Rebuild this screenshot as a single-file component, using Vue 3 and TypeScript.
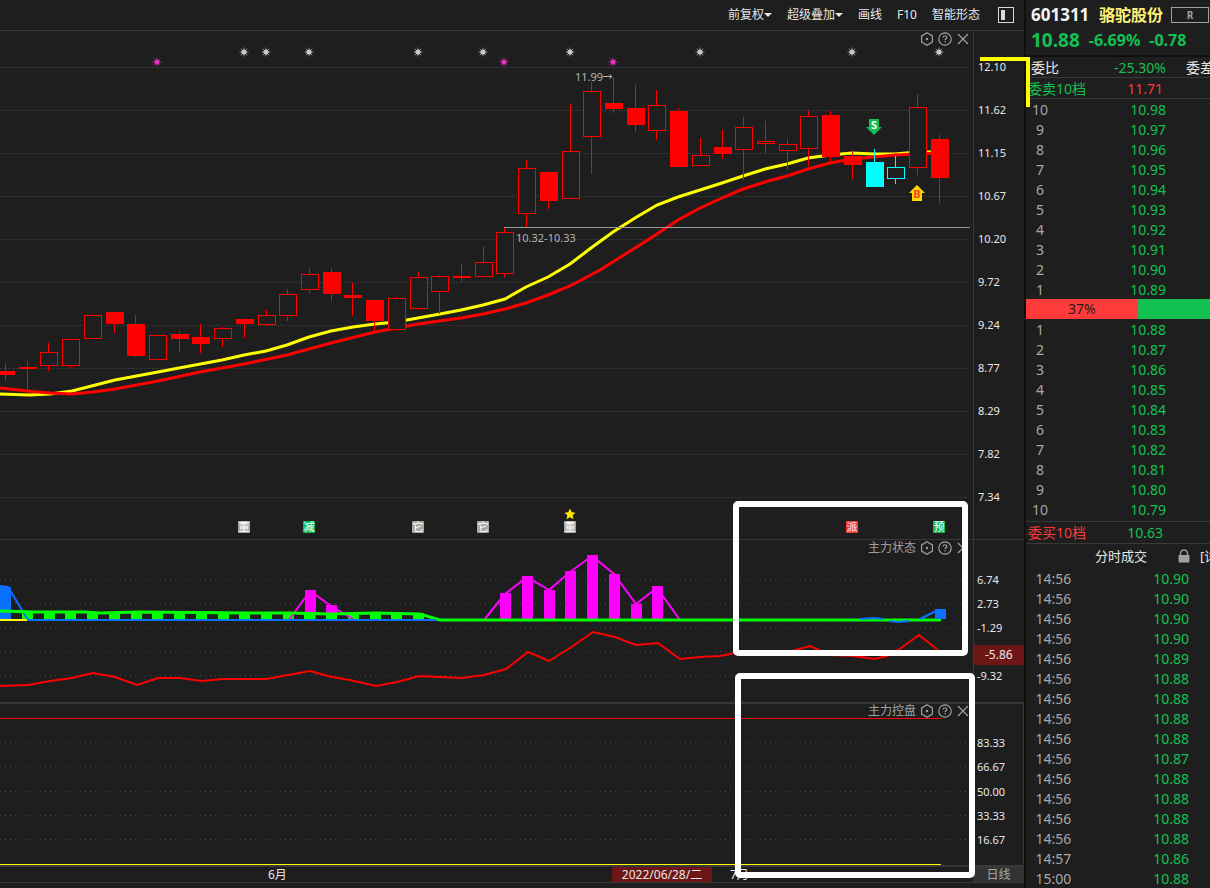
<script setup lang="ts">
type Kind = 'up' | 'down' | 'cyanUp' | 'cyanDown'
interface Candle { x: number; top: number; bottom: number; high: number; low: number; kind: Kind }

const c = (x: number, top: number, bottom: number, high: number, low: number, kind: Kind): Candle =>
  ({ x, top, bottom, high, low, kind })

const candles: Candle[] = [
  c(5, 371, 375, 363, 381, 'down'), c(27, 367, 369, 361, 390, 'down'), c(48, 352, 366, 343, 371, 'up'),
  c(70, 339, 366, 339, 368, 'up'), c(92, 315, 339, 315, 339, 'up'), c(114, 312, 324, 312, 333, 'down'),
  c(135, 324, 356, 315, 357, 'down'), c(157, 335, 360, 335, 360, 'up'), c(179, 334, 339, 331, 352, 'down'),
  c(200, 337, 344, 324, 353, 'down'), c(222, 328, 339, 327, 347, 'up'), c(244, 319, 324, 319, 338, 'down'),
  c(266, 315, 325, 310, 326, 'up'), c(287, 294, 316, 289, 321, 'up'), c(309, 274, 290, 268, 293, 'up'),
  c(331, 272, 294, 268, 301, 'down'), c(352, 295, 298, 283, 316, 'down'), c(374, 300, 321, 300, 331, 'down'),
  c(396, 298, 330, 297, 331, 'up'), c(418, 277, 309, 272, 310, 'up'), c(439, 276, 292, 275, 314, 'up'),
  c(461, 276, 278, 264, 282, 'down'), c(483, 262, 277, 246, 277, 'up'), c(504, 232, 274, 228, 277, 'up'),
  c(526, 168, 214, 160, 227, 'up'), c(548, 172, 201, 172, 209, 'down'), c(570, 151, 199, 104, 199, 'up'),
  c(591, 91, 137, 82, 174, 'up'), c(613, 103, 109, 77, 113, 'down'), c(635, 108, 125, 85, 132, 'down'),
  c(656, 105, 131, 90, 140, 'up'), c(678, 111, 167, 108, 167, 'down'), c(700, 155, 166, 138, 166, 'up'),
  c(722, 147, 154, 130, 159, 'down'), c(743, 127, 150, 117, 180, 'up'), c(765, 141, 144, 121, 153, 'up'),
  c(787, 144, 151, 139, 170, 'up'), c(808, 116, 149, 111, 166, 'up'), c(830, 115, 157, 111, 163, 'down'),
  c(852, 156, 165, 151, 179, 'down'), c(874, 162, 187, 149, 187, 'cyanDown'), c(895, 167, 179, 156, 184, 'cyanUp'),
  c(917, 107, 168, 94, 175, 'up'), c(939, 139, 178, 135, 203, 'down'),
]
const isHollow = (k: Kind) => k === 'up' || k === 'cyanUp'
const tone = (k: Kind) => (k === 'up' || k === 'down' ? '#ff0000' : '#00ffff')

const maFast = '0,394 30,395 50,394 72,391 115,380 158,372 179,368 222,360 244,355 266,351 287,345 309,337 331,331 353,327 375,324 396,322 418,318 440,314 461,310 483,305 505,299 526,287 548,277 570,264 591,248 613,232 635,218 657,205 678,197 700,190 722,183 743,176 765,169 787,164 808,158 830,155 852,153 874,154 895,154 917,152 939,152'
const maSlow = '0,388 27,391 50,393 72,394 93,392 115,389 158,381 200,372 244,364 287,355 331,343 375,332 418,324 461,318 483,314 505,309 526,303 548,295 570,286 600,270 635,248 657,234 678,220 700,208 722,198 743,189 765,182 787,176 808,169 830,163 852,159 874,157 895,155 939,153'

const priceGrid = Array.from({ length: 11 }, (_, i) => 67 + i * 43)
const priceLabels = ['12.10', '11.62', '11.15', '10.67', '10.20', '9.72', '9.24', '8.77', '8.29', '7.82', '7.34']
const stateGrid = [579, 603, 627, 651, 675]
const stateLabels = ['6.74', '2.73', '-1.29', '-5.86', '-9.32']
const controlGrid = [742, 766, 791, 815, 839]
const controlLabels = ['83.33', '66.67', '50.00', '33.33', '16.67']

const suns = [
  ...[244, 266, 309, 418, 483, 570, 700, 852, 939].map((x) => ({ x, y: 52, color: '#c8c8c8' })),
  ...[157, 504, 613].map((x) => ({ x, y: 62, color: '#e030c0' })),
]
const badges = [
  { x: 244, text: '董', color: '#a8a8a8' },
  { x: 309, text: '减', color: '#10b850' },
  { x: 418, text: '它', color: '#a8a8a8' },
  { x: 483, text: '它', color: '#a8a8a8' },
  { x: 570, text: '董', color: '#a8a8a8' },
  { x: 852, text: '派', color: '#f03c34' },
  { x: 939, text: '预', color: '#10b850' },
]

const greenBars = Array.from({ length: 19 }, (_, i) => Math.round(22 + i * 21.73))
const magentaBars = [
  { x: 305, y: 590 }, { x: 326, y: 605 }, { x: 500, y: 593 }, { x: 522, y: 576 }, { x: 544, y: 590 },
  { x: 565, y: 571 }, { x: 587, y: 555 }, { x: 609, y: 574 }, { x: 631, y: 604 }, { x: 652, y: 586 },
]
const stateLine = '0,686 28,685 50,681 72,678 93,673 115,677 137,685 158,678 180,678 202,681 223,679 266,679 288,675 310,671 332,677 350,680 376,686 397,682 419,676 440,677 462,678 484,675 506,669 528,652 549,661 570,648 593,632 615,637 636,645 658,643 680,659 700,657 720,656 735,653 757,651 788,652 810,646 830,655 853,656 875,659 887,656 901,648 919,635 938,650'

const asks = ['10.98', '10.97', '10.96', '10.95', '10.94', '10.93', '10.92', '10.91', '10.90', '10.89']
  .map((price, i) => ({ level: 10 - i, price }))
const bids = ['10.88', '10.87', '10.86', '10.85', '10.84', '10.83', '10.82', '10.81', '10.80', '10.79']
  .map((price, i) => ({ level: i + 1, price }))
const buyShare = 37
const trades: [string, string][] = [
  ['14:56', '10.90'], ['14:56', '10.90'], ['14:56', '10.90'], ['14:56', '10.90'],
  ['14:56', '10.89'], ['14:56', '10.88'], ['14:56', '10.88'], ['14:56', '10.88'],
  ['14:56', '10.88'], ['14:56', '10.87'], ['14:56', '10.88'], ['14:56', '10.88'],
  ['14:56', '10.88'], ['14:56', '10.88'], ['14:57', '10.86'], ['15:00', '10.88'],
]
const paneTools = ['settings', 'help', 'close']
const toolNames: Record<string, string> = { settings: '设置', help: '帮助', close: '关闭' }
</script>

<template>
  <div class="terminal">
    <main class="charts">
      <nav class="toolbar">
        <button type="button">前复权<i class="caret"></i></button>
        <button type="button">超级叠加<i class="caret"></i></button>
        <button type="button">画线</button>
        <button type="button">F10</button>
        <button type="button">智能形态</button>
        <button type="button" class="dock" aria-label="侧栏">
          <svg width="16" height="16" viewBox="0 0 16 16">
            <rect x="0.5" y="0.5" width="15" height="15" fill="none" stroke="#d8d8d8" />
            <rect x="3" y="3" width="4" height="10" fill="#d8d8d8" />
          </svg>
        </button>
      </nav>

      <section class="pane">
        <div class="plot">
          <svg class="canvas" viewBox="0 31 973 508">
            <line v-for="y in priceGrid" :key="y" x1="0" :y1="y + 0.5" x2="969" :y2="y + 0.5" class="grid fine" />
            <polyline :points="maFast" class="ma fast" />
            <polyline :points="maSlow" class="ma slow" />
            <line x1="504" y1="227.5" x2="970" y2="227.5" stroke="#999999" />
            <g v-for="k in candles" :key="k.x" shape-rendering="crispEdges">
              <rect :x="k.x" :y="k.high" width="1" :height="k.low - k.high" :fill="tone(k.kind)" />
              <rect
                v-if="isHollow(k.kind)" :x="k.x - 7.5" :y="k.top + 0.5" width="17" :height="k.bottom - k.top - 1"
                fill="#1e1e1e" :stroke="tone(k.kind)"
              />
              <rect v-else :x="k.x - 8" :y="k.top" width="18" :height="k.bottom - k.top" :fill="tone(k.kind)" />
            </g>
            <g v-for="s in suns" :key="s.x + '-' + s.y" :transform="`translate(${s.x} ${s.y})`" :stroke="s.color">
              <path d="M0-4.500V4.500M-4.500 0H4.500M-3.300-3.300L3.300 3.300M-3.300 3.300L3.300-3.300" stroke-opacity="0.6" />
              <circle r="2.600" :fill="s.color" stroke="none" />
            </g>
            <text x="575" y="81" class="note">11.99</text>
            <path d="M603 76.5H612M609.500 74.500L612 76.500L609.500 78.500" fill="none" stroke="#b4b4b4" />
            <text x="516" y="242" class="note">10.32-10.33</text>
            <path d="M869 119H879V127H882L874 135L866 127H869Z" fill="#10c050" />
            <text x="874" y="129" class="mark" fill="#ffffff">S</text>
            <path d="M917 185L925 193H922V201H912V193H909Z" fill="#ffd800" />
            <text x="917" y="198" class="mark" fill="#ff4020">B</text>
            <path d="M570 508.500L571.800 512.300L575.500 512.700L572.700 515.300L573.500 519.300L570 517.200L566.500 519.300L567.300 515.300L564.500 512.700L568.200 512.300Z" fill="#ffe800" />
            <g v-for="b in badges" :key="b.x">
              <rect :x="b.x - 6" y="521" width="12" height="12" rx="1" :fill="b.color" />
              <text :x="b.x" y="531" class="badge">{{ b.text }}</text>
            </g>
          </svg>
          <header class="pane-tools">
            <button v-for="t in paneTools" :key="t" type="button" :aria-label="toolNames[t]">
              <svg width="14" height="14" viewBox="0 0 14 14" fill="none" stroke="#a0a0a0" stroke-width="1.200">
                <template v-if="t === 'settings'">
                  <path d="M7 .8L12.400 3.900V10.100L7 13.200L1.600 10.100V3.900Z" /><circle cx="7" cy="7" r="1.200" fill="#a0a0a0" stroke="none" />
                </template>
                <template v-else-if="t === 'help'">
                  <circle cx="7" cy="7" r="6.200" />
                  <path d="M5.200 5.500C5.200 3.200 8.800 3.200 8.800 5.400C8.800 6.700 7 6.700 7 8.300M7 9.300V10.500" />
                </template>
                <path v-else d="M2 2L12 12M12 2L2 12" />
              </svg>
            </button>
          </header>
        </div>
        <ul class="axis price">
          <li v-for="l in priceLabels" :key="l">{{ l }}</li>
        </ul>
      </section>

      <section class="pane">
        <div class="plot">
          <svg class="canvas" viewBox="0 540 973 162">
            <line v-for="y in stateGrid" :key="y" x1="0" :y1="y + 0.5" x2="969" :y2="y + 0.5" class="grid" />
            <rect x="0" y="587" width="11" height="33" fill="#0a70ff" />
            <rect v-for="b in magentaBars" :key="b.x" :x="b.x" :y="b.y" width="11" :height="620 - b.y" fill="#ff00ff" />
            <rect v-for="x in greenBars" :key="x" :x="x" y="613" width="11" height="6" fill="#00ff00" />
            <polyline points="0,586 8,587 28,620 440,620" stroke="#0a70ff" class="curve" />
            <polyline points="289,620 310,591 331,606 353,619" stroke="#ff00ff" class="curve" />
            <polyline points="484,620 505,594 527,577 549,590 570,572 592,556 614,574 636,604 657,588 680,620" stroke="#ff00ff" class="curve" />
            <polyline points="0,611 35,612 85,612 100,613 140,612 250,613 290,613 330,614 375,613 420,614 440,620 941,620" stroke="#00ff00" class="curve strong" />
            <polyline points="0,620 27,620" stroke="#ffff00" class="curve" />
            <polyline points="28,620 436,620" stroke="#0a70ff" class="curve" />
            <polyline points="860,619 874,618 884,619" stroke="#0a70ff" class="curve" />
            <polyline points="889,621 898,622 910,621" stroke="#0a70ff" class="curve" />
            <polyline points="920,619 936,611" stroke="#0a70ff" class="curve" />
            <rect x="935" y="609" width="11" height="10" fill="#0a70ff" />
            <polyline :points="stateLine" stroke="#ff0000" class="curve" />
          </svg>
          <header class="pane-tools">
            <h2>主力状态</h2>
            <button v-for="t in paneTools" :key="t" type="button" :aria-label="toolNames[t]">
              <svg width="14" height="14" viewBox="0 0 14 14" fill="none" stroke="#a0a0a0" stroke-width="1.200">
                <template v-if="t === 'settings'">
                  <path d="M7 .8L12.400 3.900V10.100L7 13.200L1.600 10.100V3.900Z" /><circle cx="7" cy="7" r="1.200" fill="#a0a0a0" stroke="none" />
                </template>
                <template v-else-if="t === 'help'">
                  <circle cx="7" cy="7" r="6.200" />
                  <path d="M5.200 5.500C5.200 3.200 8.800 3.200 8.800 5.400C8.800 6.700 7 6.700 7 8.300M7 9.300V10.500" />
                </template>
                <path v-else d="M2 2L12 12M12 2L2 12" />
              </svg>
            </button>
          </header>
        </div>
        <ul class="axis state">
          <li v-for="l in stateLabels" :key="l" :class="{ current: l === '-5.86' }">{{ l }}</li>
        </ul>
      </section>

      <section class="pane thick">
        <div class="plot">
          <svg class="canvas" viewBox="0 704 973 161">
            <line v-for="y in controlGrid" :key="y" x1="0" :y1="y + 0.5" x2="969" :y2="y + 0.5" class="grid" />
            <rect x="0" y="718" width="941" height="1" fill="#ff0000" />
            <rect x="0" y="864" width="941" height="1" fill="#ffff00" />
          </svg>
          <header class="pane-tools">
            <h2>主力控盘</h2>
            <button v-for="t in paneTools" :key="t" type="button" :aria-label="toolNames[t]">
              <svg width="14" height="14" viewBox="0 0 14 14" fill="none" stroke="#a0a0a0" stroke-width="1.200">
                <template v-if="t === 'settings'">
                  <path d="M7 .8L12.400 3.900V10.100L7 13.200L1.600 10.100V3.900Z" /><circle cx="7" cy="7" r="1.200" fill="#a0a0a0" stroke="none" />
                </template>
                <template v-else-if="t === 'help'">
                  <circle cx="7" cy="7" r="6.200" />
                  <path d="M5.200 5.500C5.200 3.200 8.800 3.200 8.800 5.400C8.800 6.700 7 6.700 7 8.300M7 9.300V10.500" />
                </template>
                <path v-else d="M2 2L12 12M12 2L2 12" />
              </svg>
            </button>
          </header>
        </div>
        <ul class="axis control">
          <li v-for="l in controlLabels" :key="l">{{ l }}</li>
        </ul>
      </section>

      <footer class="dates">
        <div class="timeline">
          <span>6月</span>
          <time datetime="2022-06-28">2022/06/28/二</time>
          <span>7月</span>
        </div>
        <button type="button" class="period">日线</button>
      </footer>

      <div class="frame frame-state"></div>
      <div class="frame frame-control"></div>
    </main>

    <aside class="quote">
      <div class="sheet">
        <header class="stock">
          <div class="name">
            <strong class="code">601311</strong>
            <strong class="title">骆驼股份</strong>
            <span class="tag">R</span>
          </div>
          <div class="last">
            <strong class="price-now">10.88</strong>
            <strong>-6.69%</strong>
            <strong>-0.78</strong>
          </div>
        </header>
        <div class="summary">
          <span>委比</span><span class="green value ratio">-25.30%</span><span class="diff">委差</span>
        </div>
        <div class="summary total">
          <span class="green">委卖10档</span><span class="red value">11.71</span>
        </div>
        <table class="book">
          <tbody>
            <tr v-for="a in asks" :key="a.level"><th scope="row">{{ a.level }}</th><td>{{ a.price }}</td></tr>
          </tbody>
        </table>
        <div class="share">
          <div class="buy" :style="{ width: buyShare + '%' }">{{ buyShare }}%</div>
        </div>
        <table class="book">
          <tbody>
            <tr v-for="b in bids" :key="b.level"><th scope="row">{{ b.level }}</th><td>{{ b.price }}</td></tr>
          </tbody>
        </table>
        <div class="summary total bid-total">
          <span class="red">委买10档</span><span class="green value">10.63</span>
        </div>
        <div class="trades-head">
          <h2>分时成交</h2>
          <svg width="12" height="14" viewBox="0 0 12 14">
            <path d="M2.500 7V4.500A3.500 3.500 0 0 1 9.500 4.500V7" fill="none" stroke="#a0a0a0" stroke-width="1.400" />
            <rect x="0.500" y="6" width="11" height="7.500" rx="1" fill="#a0a0a0" />
          </svg>
          <a href="#">[详</a>
        </div>
        <table class="trades">
          <tbody>
            <tr v-for="(t, i) in trades" :key="i"><th scope="row">{{ t[0] }}</th><td>{{ t[1] }}</td></tr>
          </tbody>
        </table>
      </div>
    </aside>
    <div class="bracket"></div>
  </div>
</template>

<style>
body {
  margin: 0;
  background: #1e1e1e;
}
</style>

<style scoped>
.terminal {
  position: relative;
  display: flex;
  height: 100vh;
  overflow: hidden;
  background: #1e1e1e;
  color: #e8e8e8;
  font: 12px/16px "Noto Sans", "Noto Sans CJK SC", sans-serif;
}
button {
  padding: 0;
  border: 0;
  background: none;
  color: inherit;
  font: inherit;
  cursor: pointer;
}
h2 {
  margin: 0;
  font-size: inherit;
  font-weight: 400;
}
.charts {
  position: relative;
  flex: 1;
  min-width: 0;
}
.toolbar {
  display: flex;
  align-items: center;
  justify-content: flex-end;
  gap: 15px;
  height: 30px;
  padding-right: 10px;
}
.toolbar button {
  display: flex;
  align-items: center;
}
.toolbar .dock {
  margin-left: 3px;
}
.caret {
  border: 4px solid transparent;
  border-top-color: #e8e8e8;
  border-bottom: 0;
}
.pane {
  display: flex;
  border-top: 1px solid #383838;
}
.pane.thick {
  border-top-width: 2px;
}
.plot {
  position: relative;
  flex: 1;
  min-width: 0;
}
.canvas {
  display: block;
  width: 100%;
  height: auto;
}
.grid {
  stroke: #444444;
  stroke-dasharray: 1 4;
  shape-rendering: crispEdges;
}
.grid.fine {
  stroke: #3c3c3c;
  stroke-dasharray: 1 1;
}
.ma {
  fill: none;
  stroke-width: 3;
}
.fast {
  stroke: #ffff00;
}
.slow {
  stroke: #ff0000;
}
.curve {
  fill: none;
  stroke-width: 2;
}
.curve.strong {
  stroke-width: 3;
}
.note {
  fill: #b4b4b4;
  font-size: 11px;
}
.mark {
  font-size: 11px;
  font-weight: 700;
  text-anchor: middle;
}
.badge {
  fill: #ffffff;
  font-size: 11px;
  text-anchor: middle;
}
.pane-tools {
  position: absolute;
  top: 0;
  right: 3px;
  display: flex;
  align-items: center;
  gap: 4px;
  height: 16px;
  color: #a0a0a0;
}
.thick .pane-tools {
  height: 14px;
}
.pane-tools button,
.pane-tools svg {
  display: block;
  width: 14px;
  height: 14px;
}
.axis {
  display: flex;
  flex-direction: column;
  justify-content: space-between;
  box-sizing: border-box;
  width: 51px;
  margin: 0;
  padding: 0;
  border-left: 1px solid #383838;
  list-style: none;
  font-size: 11px;
  line-height: 14px;
}
.axis li {
  padding-left: 3px;
}
.axis.price {
  padding: 29px 0 35px;
}
.axis.price li {
  padding-left: 4px;
}
.axis.state {
  justify-content: flex-start;
  gap: 10px;
  padding-top: 33px;
}
.axis .current {
  margin-bottom: -6px;
  padding-left: 11px;
  background: #6e1616;
  font-size: 12px;
  line-height: 20px;
}
.axis.control {
  padding: 32px 0 18px;
  border-right: 1px solid #383838;
}
.dates {
  display: flex;
  border-top: 2px solid #383838;
  border-bottom: 1px solid #383838;
  line-height: 15px;
}
.timeline {
  display: flex;
  flex: 1;
  padding-left: 268px;
}
.timeline time {
  width: 100px;
  margin: 0 18px 0 auto;
  background: #6e1616;
  text-align: center;
}
.timeline span:last-child {
  width: 243px;
}
.period {
  width: 51px;
  background: #333333;
  color: #a8a8a8;
}
.frame {
  position: absolute;
  box-sizing: border-box;
  border: 6px solid #ffffff;
  border-radius: 5px;
  pointer-events: none;
}
.frame-state {
  top: 501px;
  right: 56px;
  width: 235px;
  height: 155px;
}
.frame-control {
  top: 673px;
  right: 49px;
  width: 240px;
  height: 205px;
}
.bracket {
  position: absolute;
  top: 57px;
  right: 180px;
  box-sizing: border-box;
  width: 50px;
  height: 50px;
  border: solid #ffff00;
  border-width: 4px 4px 0 0;
  pointer-events: none;
}
.quote {
  width: 184px;
  border-left: 2px solid #101010;
  overflow: hidden;
  font-size: 14px;
  line-height: 20px;
}
.sheet {
  width: 302px;
}
.green {
  color: #12c152;
}
.red {
  color: #ff3838;
}
.stock {
  height: 55px;
  border-bottom: 2px solid #101010;
}
.name,
.last {
  display: flex;
  align-items: center;
  padding-left: 5px;
}
.name {
  height: 30px;
}
.code {
  width: 68px;
  color: #f4f4f4;
  font-size: 17px;
}
.title {
  width: 72px;
  color: #fff078;
  font-size: 16px;
}
.tag {
  box-sizing: border-box;
  width: 38px;
  border: 1px solid #a0a0a0;
  color: #a0a0a0;
  font-size: 10px;
  font-weight: 700;
  line-height: 14px;
  text-align: center;
}
.last {
  gap: 9px;
  height: 20px;
  color: #12c152;
  font-size: 16px;
}
.price-now {
  font-size: 19px;
}
.summary {
  display: flex;
  align-items: center;
  box-sizing: border-box;
  height: 21px;
  padding: 2px 0 0 5px;
  border-bottom: 1px solid #383838;
  line-height: 18px;
}
.summary .value {
  margin-left: auto;
}
.summary .ratio {
  margin-right: 20px;
}
.summary .diff {
  width: 142px;
}
.summary.total {
  padding: 2px 165px 0 2px;
}
.summary.bid-total {
  height: 23px;
  margin-top: 2px;
  padding-top: 0;
  border-top: 1px solid #383838;
}
table {
  border-collapse: collapse;
}
th,
td {
  box-sizing: border-box;
  height: 20px;
  padding: 2px 0 0;
  line-height: 18px;
}
th {
  color: #a8a8a8;
  font-weight: 400;
}
td {
  color: #12c152;
  text-align: right;
}
.book th {
  width: 28px;
}
.book td {
  width: 112px;
}
.share {
  background: #12c152;
  color: #1e1e1e;
}
.buy {
  background: #ff3a3a;
  text-align: center;
}
.trades-head {
  display: flex;
  align-items: center;
  height: 24px;
  padding-left: 69px;
  font-size: 13px;
}
.trades-head svg {
  margin: 0 10px 0 31px;
}
.trades-head a {
  color: inherit;
  text-decoration: none;
}
.trades th {
  width: 55px;
}
.trades td {
  width: 108px;
}
</style>
